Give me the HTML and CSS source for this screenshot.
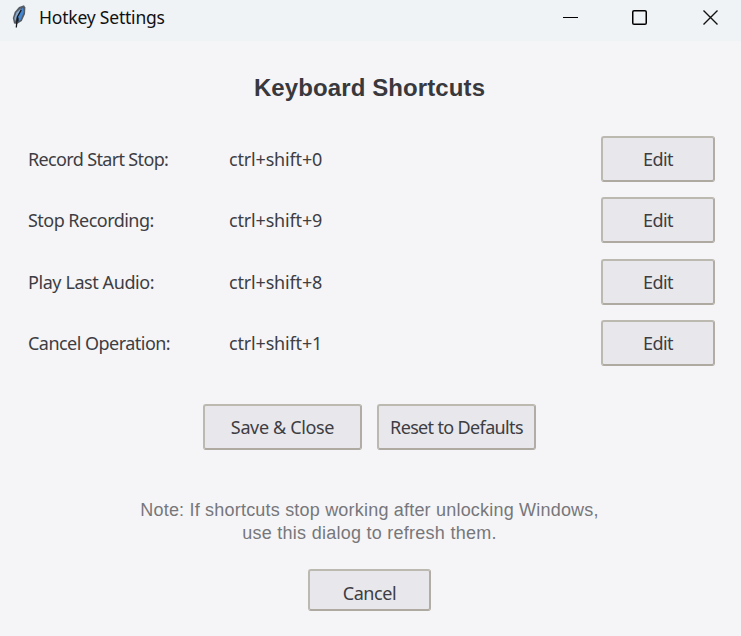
FILE: index.html
```html
<!DOCTYPE html>
<html lang="en">
<head>
<meta charset="utf-8">
<title>Hotkey Settings</title>
<link rel="stylesheet" href="styles.css">
</head>
<body>
<header class="titlebar">
  <svg class="feather" width="16" height="24" viewBox="0 0 16 24">
    <path d="M13 .2 14.4 2.5 14 9 10.8 16 6 19 3 18.5 1.8 13 3.7 7 8 2Z" fill="#555b64"/>
    <path d="M12 2.5 12.8 7 9.8 14.5 6.5 17.2 6.7 12 9 6Z" fill="#4386d2"/>
    <path d="M10 3.2 5.5 7.5 3.4 13 4 16.5 7 10Z" fill="#8bacd0"/>
    <path d="M10.3 5 6.3 12 5.3 22.5M7 12.5v4" fill="none" stroke="#16181d" stroke-width="1.3"/>
  </svg>
  <span class="title">Hotkey Settings</span>
  <div class="controls">
    <svg width="16" height="16" viewBox="0 0 16 16"><path d="M0 7.5h15" stroke="#000"/></svg>
    <svg width="16" height="16" viewBox="0 0 16 16"><rect x=".75" y=".75" width="13.5" height="13.5" rx="1.3" fill="none" stroke="#000" stroke-width="1.5"/></svg>
    <svg width="16" height="16" viewBox="0 0 16 16"><path d="M.5.5 14.5 14.5M14.5.5.5 14.5" stroke="#111" stroke-width="1.4"/></svg>
  </div>
</header>
<main>
  <h1>Keyboard Shortcuts</h1>
  <section class="shortcuts">
    <div class="row"><span class="label wide">Record Start Stop:</span><span class="keys">ctrl+shift+0</span><button>Edit</button></div>
    <div class="row"><span class="label">Stop Recording:</span><span class="keys">ctrl+shift+9</span><button>Edit</button></div>
    <div class="row"><span class="label loose">Play Last Audio:</span><span class="keys">ctrl+shift+8</span><button>Edit</button></div>
    <div class="row"><span class="label">Cancel Operation:</span><span class="keys">ctrl+shift+1</span><button>Edit</button></div>
  </section>
  <div class="actions">
    <button class="save">Save &amp; Close</button>
    <button class="reset">Reset to Defaults</button>
  </div>
  <p class="note">Note: If shortcuts stop working after unlocking Windows,<br><span class="second">use this dialog to refresh them.</span></p>
  <button class="cancel">Cancel</button>
</main>
</body>
</html>
```
FILE: styles.css
```css
* { box-sizing: border-box; }
body {
  margin: 0;
  height: 636px;
  overflow: hidden;
  background: #f5f5f7;
  color: #3d3d43;
  font: 18px/24px "Noto Sans", sans-serif;
}
.titlebar {
  height: 41px;
  padding: 5px 22px 0 11px;
  display: flex;
  align-items: flex-start;
  background: #eff3f5;
  color: #111;
}
.title { margin: 0 0 0 12px; font-size: 17.5px; letter-spacing: -0.2px; white-space: nowrap; }
.controls { margin: 5px 0 0 auto; display: flex; gap: 55px; }
.controls svg:first-child { margin-right: -2px; }
main { padding-right: 2px; display: flex; flex-direction: column; align-items: center; }
h1 {
  margin: 32px 0 0;
  color: #38383d;
  font: bold 24px/30px "Liberation Sans", sans-serif;
  letter-spacing: 0.1px;
}
.shortcuts {
  width: 100%;
  margin-top: 32.7px;
  padding: 0 24px 0 28px;
  display: grid;
  gap: 15.45px;
}
.row { display: grid; grid-template-columns: 201px 1fr 114px; align-items: center; white-space: nowrap; }
.label { letter-spacing: -0.53px; }
.wide { letter-spacing: -0.65px; }
.loose { letter-spacing: -0.42px; }
.keys { letter-spacing: -0.17px; }
button {
  height: 46px;
  padding: 0;
  border: 2px solid #b3afa6;
  border-color: #bcb9b0 #b1ada5 #aeaaa1 #bcb9b0;
  border-radius: 3px;
  background: #e8e7eb;
  color: inherit;
  font: inherit;
  letter-spacing: -0.55px;
  white-space: nowrap;
}
.actions { margin-top: 38px; display: flex; gap: 15px; }
.actions button { width: 159px; }
.save { letter-spacing: -0.35px; }
.reset { letter-spacing: -0.65px; }
.note {
  margin: 49px 0 0;
  color: #77777b;
  font: 18px/23px "Liberation Sans", sans-serif;
  letter-spacing: 0.2px;
  text-align: center;
  white-space: nowrap;
}
.second { letter-spacing: 0.26px; }
.cancel { width: 123px; height: 42px; margin-top: 24px; padding-top: 5px; letter-spacing: -0.4px; }
```
